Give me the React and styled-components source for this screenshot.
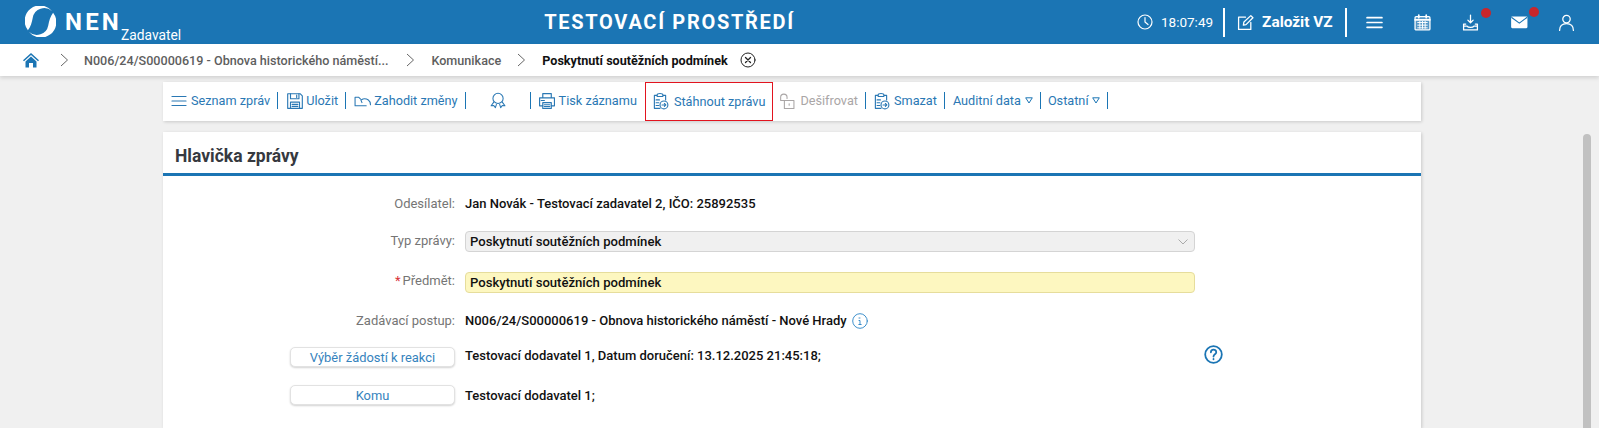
import React from "react";
import styled, { createGlobalStyle } from "styled-components";

const blue = "#1b75b4";
const linkBlue = "#2a78b4";

const Global = createGlobalStyle`
  html, body { margin: 0; padding: 0; background: #f0f0f0; }
  body { font-family: Roboto, "Liberation Sans", sans-serif; font-size: 13px; overflow: hidden; }
`;

const Page = styled.div`
  position: relative;
  height: 428px;
  overflow: hidden;
  background: #f0f0f0;
`;

const Header = styled.header`
  height: 44px;
  background: ${blue};
  color: #fff;
  display: flex;
  align-items: center;
`;
const Brand = styled.div`
  width: 202px;
  flex: none;
  display: flex;
  align-items: flex-start;
  padding-left: 25px;
  box-sizing: border-box;
  height: 44px;
`;
const Logo = styled.svg`
  width: 31px;
  height: 31px;
  margin-top: 6px;
  flex: none;
`;
const BrandName = styled.span`
  font-size: 24px;
  font-weight: 700;
  letter-spacing: 3.2px;
  line-height: 24px;
  margin: 10px 0 0 9px;
`;
const BrandRole = styled.span`
  font-size: 13.8px;
  line-height: 16px;
  margin: 27px 0 0 -1px;
`;
const Title = styled.div`
  flex: 1;
  text-align: center;
  font-size: 20px;
  font-weight: 700;
  letter-spacing: 1.7px;
`;
const HeadRight = styled.div`
  width: 462px;
  flex: none;
  display: flex;
  align-items: center;
  height: 44px;
`;
const Time = styled.span`
  font-size: 13.5px;
  margin: 0 10px 0 8px;
`;
const HeadSep = styled.span`
  width: 2px;
  height: 29px;
  background: #fff;
`;
const NewTender = styled.span`
  font-size: 15.4px;
  font-weight: 700;
  margin: 0 12px 0 8px;
`;
const HeadIcon = styled.span`
  position: relative;
  width: 48px;
  display: flex;
  justify-content: center;
  flex: none;
`;
const Dot = styled.i`
  position: absolute;
  top: -6px;
  left: 34px;
  width: 10px;
  height: 10px;
  border-radius: 50%;
  background: #c8262c;
`;

const Crumbs = styled.nav`
  height: 32px;
  background: #fff;
  box-shadow: 0 2px 4px rgba(0, 0, 0, 0.13);
  display: flex;
  align-items: center;
  padding-left: 23px;
  font-size: 12.6px;
  font-weight: 500;
  color: #5e5e5e;
  position: relative;
`;
const Crumb = styled.span`
  color: ${(p) => (p.$current ? "#111" : "#5e5e5e")};
  font-weight: ${(p) => (p.$current ? 700 : 500)};
`;
const CrumbArrow = styled.svg`
  width: 9px;
  height: 14px;
  margin: 0 ${(p) => p.$after || 17}px 0 ${(p) => p.$before || 17}px;
  flex: none;
`;

const Column = styled.main`
  width: 1258px;
  margin: 6px 0 0 163px;
`;
const Toolbar = styled.div`
  height: 39px;
  background: #fff;
  box-shadow: 1px 1px 3px rgba(0, 0, 0, 0.16);
  display: flex;
  align-items: center;
  padding-left: 8px;
  box-sizing: border-box;
  color: ${linkBlue};
  font-size: 12.7px;
`;
const Tool = styled.span`
  display: flex;
  align-items: center;
  gap: ${(p) => p.$gap ?? 4}px;
  height: 39px;
  padding-bottom: 2px;
  box-sizing: border-box;
  color: ${(p) => (p.$disabled ? "#aaa6a6" : linkBlue)};
  white-space: nowrap;
`;
const HighlightTool = styled(Tool)`
  border: 1px solid #e2141f;
  padding: 0 7px 1px 5px;
  margin: 0 5px 0 8px;
`;
const ToolSep = styled.span`
  width: 1px;
  height: 17px;
  background: ${blue};
  margin: -2px ${(p) => p.$right ?? 8}px 0 ${(p) => p.$left ?? 7}px;
  flex: none;
`;
const Caret = styled.svg`
  width: 8px;
  height: 7px;
  margin-left: 1px;
`;
const Award = styled.span`
  display: flex;
  margin-top: -2px;
`;

const Card = styled.section`
  margin-top: 11px;
  background: #fff;
  height: 296px;
  box-shadow: 1px 1px 3px rgba(0, 0, 0, 0.16);
`;
const CardTitle = styled.h2`
  margin: 0;
  height: 44px;
  box-sizing: border-box;
  padding: 13px 0 0 12px;
  font-size: 17.5px;
  line-height: 22px;
  font-weight: 700;
  color: #36393f;
  border-bottom: 3px solid ${blue};
`;
const Form = styled.div`
  display: grid;
  grid-template-columns: 292px 730px 60px;
  column-gap: 10px;
  padding-top: 17px;
`;
const Row = styled.div`
  display: contents;
`;
const Label = styled.div`
  height: ${(p) => p.$h || 21}px;
  margin-bottom: ${(p) => p.$mb || 20}px;
  padding-bottom: ${(p) => p.$lift || 0}px;
  box-sizing: border-box;
  display: flex;
  align-items: center;
  justify-content: flex-end;
  color: #757575;
`;
const Value = styled.div`
  height: ${(p) => p.$h || 21}px;
  margin-bottom: ${(p) => p.$mb || 20}px;
  display: flex;
  align-items: center;
  font-weight: 500;
  color: #111;
  gap: 5px;
  font-size: 13px;
`;
const Field = styled.div`
  width: 100%;
  height: 21px;
  box-sizing: border-box;
  padding-left: 4px;
  border-radius: 4px;
  border: 1px solid ${(p) => (p.$required ? "#e6dd9c" : "#d4d4d4")};
  background: ${(p) => (p.$required ? "#fdf7c0" : "#f0f0f0")};
  display: flex;
  align-items: center;
  justify-content: space-between;
  font-size: 13.1px;
`;
const Star = styled.span`
  color: #d8343a;
  margin-right: 2px;
`;
const PickButton = styled.button`
  width: 165px;
  height: 20px;
  padding: 1px 0 0;
  background: #fff;
  border: 1px solid #e2e2e2;
  border-radius: 5px;
  box-shadow: 0 1px 2px rgba(0, 0, 0, 0.18);
  color: #3583bd;
  font: 400 12.9px Roboto, sans-serif;
`;
const HelpCell = styled.div`
  margin: -2px 0 0 -1px;
  height: 20px;
`;
const Thumb = styled.div`
  position: absolute;
  left: 1583px;
  top: 134px;
  bottom: 0;
  width: 8px;
  border-radius: 4px 4px 0 0;
  background: #c1c1c1;
`;

const Ico = ({ size = 16, children, stroke = "currentColor", sw = 1.2 }) => (
  <svg width={size} height={size} viewBox="0 0 16 16" fill="none" stroke={stroke} strokeWidth={sw} strokeLinecap="round" strokeLinejoin="round">
    {children}
  </svg>
);

const Menu = ({ size = 16, sw = 1.2 }) => (
  <Ico size={size} sw={sw}>
    <path d="M1 3.500h14M1 8h14M1 12.500h14" />
  </Ico>
);

const ClipDownload = () => (
  <Ico size={18} sw={1}>
    <path d="M5.500 2.500c0-1.500 5-1.500 5 0v1.500h-5zM5.500 3H3v11.500h5M10.500 3H13v4" />
    <path d="M4.500 7h3M4.500 9.500h2.500M4.500 12h2.500" />
    <circle cx="11.500" cy="11.500" r="3.500" />
    <path d="M9.800 11.500h3.400M11.900 10.200l1.300 1.300-1.300 1.300" />
  </Ico>
);

const Arrow = ({ before, after }) => (
  <CrumbArrow $before={before} $after={after} viewBox="0 0 9 14" fill="none" stroke="#666" strokeWidth="1">
    <path d="M1 1l6.500 6L1 13" />
  </CrumbArrow>
);

const Down = () => (
  <Caret viewBox="0 0 8 7" fill="none" stroke={blue} strokeWidth="1">
    <path d="M0.700 0.800h6.600L4 6z" />
  </Caret>
);

const swoosh = "M3 25A15.800 15.800 0 0 1 28 5.500A12 12 0 0 0 8 12C7 17 6 21 3 25z";

export default function App() {
  return (
    <Page>
      <Global />
      <Header>
        <Brand>
          <Logo viewBox="0 0 32 32" fill="#fff">
            <path d={swoosh} />
            <path d={swoosh} transform="rotate(180 16 16)" />
          </Logo>
          <BrandName>NEN</BrandName>
          <BrandRole>Zadavatel</BrandRole>
        </Brand>
        <Title>TESTOVACÍ PROSTŘEDÍ</Title>
        <HeadRight>
          <Ico>
            <circle cx="8" cy="8" r="7" />
            <path d="M8 3.500V8l3 2.500" />
          </Ico>
          <Time>18:07:49</Time>
          <HeadSep />
          <span style={{ width: 12 }} />
          <Ico size={17}>
            <path d="M8 3H1.500v11.500H13V8" />
            <path d="M6 10.500l.5-3L13 1.500l2 2-6.500 6.500z" />
          </Ico>
          <NewTender>Založit VZ</NewTender>
          <HeadSep />
          <HeadIcon style={{ marginLeft: 4 }}>
            <Menu size={17} sw={1.600} />
          </HeadIcon>
          <HeadIcon>
            <Ico size={17}>
              <rect x="1" y="2.500" width="14" height="12.500" rx="1" fill="#fff" fillOpacity="0.25" />
              <path d="M1 5.500h14M4.500 1v2.500M11.500 1v2.500" strokeWidth="1.600" />
              <path d="M3.500 8h9M3.500 10.500h9M3.500 13h9M5.500 7v6.500M8 7v6.500M10.500 7v6.500" strokeWidth="0.900" />
            </Ico>
          </HeadIcon>
          <HeadIcon>
            <Ico size={17}>
              <path d="M8 1v7M5.500 5.800L8 8.300l2.500-2.500" />
              <path d="M3.500 9.500H1.500v5.500h13V9.500h-2M1.500 11.500H5c.5 1.500 5.500 1.500 6 0h3.500" />
            </Ico>
            <Dot />
          </HeadIcon>
          <HeadIcon>
            <Ico size={18}>
              <rect x="1" y="3" width="14.500" height="10.500" rx="1" fill="#fff" stroke="none" />
              <path d="M1.500 4l6.800 5L15 4" stroke={blue} strokeWidth="1" />
            </Ico>
            <Dot />
          </HeadIcon>
          <HeadIcon>
            <Ico size={17}>
              <circle cx="8" cy="4.800" r="3.500" />
              <path d="M1.500 15.500c0-4 2.500-6.500 6.500-6.500s6.500 2.500 6.500 6.500" />
            </Ico>
          </HeadIcon>
        </HeadRight>
      </Header>

      <Crumbs>
        <svg width="16" height="16" viewBox="0 0 16 16">
          <path d="M8 1L0 8.200l1 1.100L8 3l7 6.300 1-1.100z" fill="#1b75b4" />
          <path d="M2.500 9.500L8 4.500l5.500 5V15.500H10V11H6v4.500H2.500z" fill="#1b75b4" />
        </svg>
        <Arrow before={21} after={15} />
        <Crumb>N006/24/S00000619 - Obnova historického náměstí...</Crumb>
        <Arrow before={18} after={16} />
        <Crumb>Komunikace</Crumb>
        <Arrow before={16} after={16} />
        <Crumb $current>Poskytnutí soutěžních podmínek</Crumb>
        <span style={{ width: 12 }} />
        <Ico stroke="#222" sw={1}>
          <circle cx="8" cy="8" r="7" />
          <path d="M5.500 5.500l5 5M10.500 5.500l-5 5" strokeWidth="1.300" />
        </Ico>
      </Crumbs>

      <Column>
        <Toolbar>
          <Tool $gap={4}>
            <Menu />
            Seznam zpráv
          </Tool>
          <ToolSep $left={7} $right={8} />
          <Tool $gap={2}>
            <Ico size={18} sw={1}>
              <path d="M1.500 1.500h11l2 2v11h-13z" />
              <path d="M4 1.500v4.500h7.500V1.500M9.500 2.800v2M4 14.500V9h8v5.500M5.500 11h5M5.500 12.800h5" />
            </Ico>
            Uložit
          </Tool>
          <ToolSep $left={7} $right={8} />
          <Tool $gap={3}>
            <Ico size={17} sw={1}>
              <path d="M1 5h3.500l1.500 1.500M1 5v8h10.500M15.500 12c0-4-3-6-7-5.500L6.500 7.500l1 2.500" />
            </Ico>
            Zahodit změny
          </Tool>
          <ToolSep $left={7} $right={23} />
          <Award>
            <Ico size={17} sw={1}>
              <circle cx="8.500" cy="6" r="4.800" />
              <path d="M4.500 9.500L2 13l2.500-.3 1.500 2 1-3M12.500 9.500L15 13l-2.500-.3-1.500 2-1-3" />
            </Ico>
          </Award>
          <ToolSep $left={24} $right={7} />
          <Tool $gap={4}>
            <Ico size={17} sw={1.100}>
              <path d="M4.500 5V1.500h8V5M4.500 13H1.500V5.500h14V13h-3" />
              <path d="M4.500 10h8v5.500h-8zM6 12h5M6 13.800h5M3 8h3" />
            </Ico>
            Tisk záznamu
          </Tool>
          <HighlightTool $gap={5}>
            <ClipDownload />
            Stáhnout zprávu
          </HighlightTool>
          <Tool $disabled $gap={5}>
            <Ico size={17} sw={1}>
              <path d="M6 8h9v7.500H6zM6 8H2.500V5a3 3 0 0 1 6 0v1" />
              <path d="M10.500 11v1.500" />
            </Ico>
            Dešifrovat
          </Tool>
          <ToolSep $left={7} $right={6} />
          <Tool $gap={4}>
            <ClipDownload />
            Smazat
          </Tool>
          <ToolSep $left={7} $right={8} />
          <Tool $gap={3}>
            Auditní data
            <Down />
          </Tool>
          <ToolSep $left={7} $right={7} />
          <Tool $gap={2}>
            Ostatní
            <Down />
          </Tool>
          <ToolSep $left={7} $right={0} />
        </Toolbar>

        <Card>
          <CardTitle>Hlavička zprávy</CardTitle>
          <Form>
            <Row>
              <Label $mb={17}>Odesílatel:</Label>
              <Value $mb={17}>Jan Novák - Testovací zadavatel 2, IČO: 25892535</Value>
              <div />
            </Row>
            <Row>
              <Label $lift={2}>Typ zprávy:</Label>
              <Value>
                <Field>
                  Poskytnutí soutěžních podmínek
                  <svg width="10" height="6" viewBox="0 0 10 6" fill="none" stroke="#aaa" style={{ marginRight: 6 }}>
                    <path d="M0.500 0.500L5 5l4.500-4.500" />
                  </svg>
                </Field>
              </Value>
              <div />
            </Row>
            <Row>
              <Label $mb={17} $lift={4}>
                <Star>*</Star>Předmět:
              </Label>
              <Value $mb={17}>
                <Field $required>Poskytnutí soutěžních podmínek</Field>
              </Value>
              <div />
            </Row>
            <Row>
              <Label $mb={16}>Zadávací postup:</Label>
              <Value $mb={16}>
                N006/24/S00000619 - Obnova historického náměstí - Nové Hrady
                <Ico stroke="#2a84c6" sw={0.900}>
                  <circle cx="8" cy="8" r="7.300" />
                  <path d="M7 5h1M7 7.500h1v4M6.800 11.500h2.400" />
                </Ico>
              </Value>
              <div />
            </Row>
            <Row>
              <Label $h={20} $mb={18}>
                <PickButton>Výběr žádostí k reakci</PickButton>
              </Label>
              <Value $h={16} $mb={22}>Testovací dodavatel 1, Datum doručení: 13.12.2025 21:45:18;</Value>
              <HelpCell>
                <Ico size={19} stroke="#1b75b4" sw={1.500}>
                  <circle cx="8" cy="8" r="7" />
                  <path d="M5.800 6.200c0-3 4.500-3 4.500-.2 0 1.800-2.300 1.800-2.300 3.700" />
                  <path d="M8 11.800v.2" />
                </Ico>
              </HelpCell>
            </Row>
            <Row>
              <Label $h={20}>
                <PickButton>Komu</PickButton>
              </Label>
              <Value $h={20}>Testovací dodavatel 1;</Value>
              <div />
            </Row>
          </Form>
        </Card>
      </Column>
      <Thumb />
    </Page>
  );
}
